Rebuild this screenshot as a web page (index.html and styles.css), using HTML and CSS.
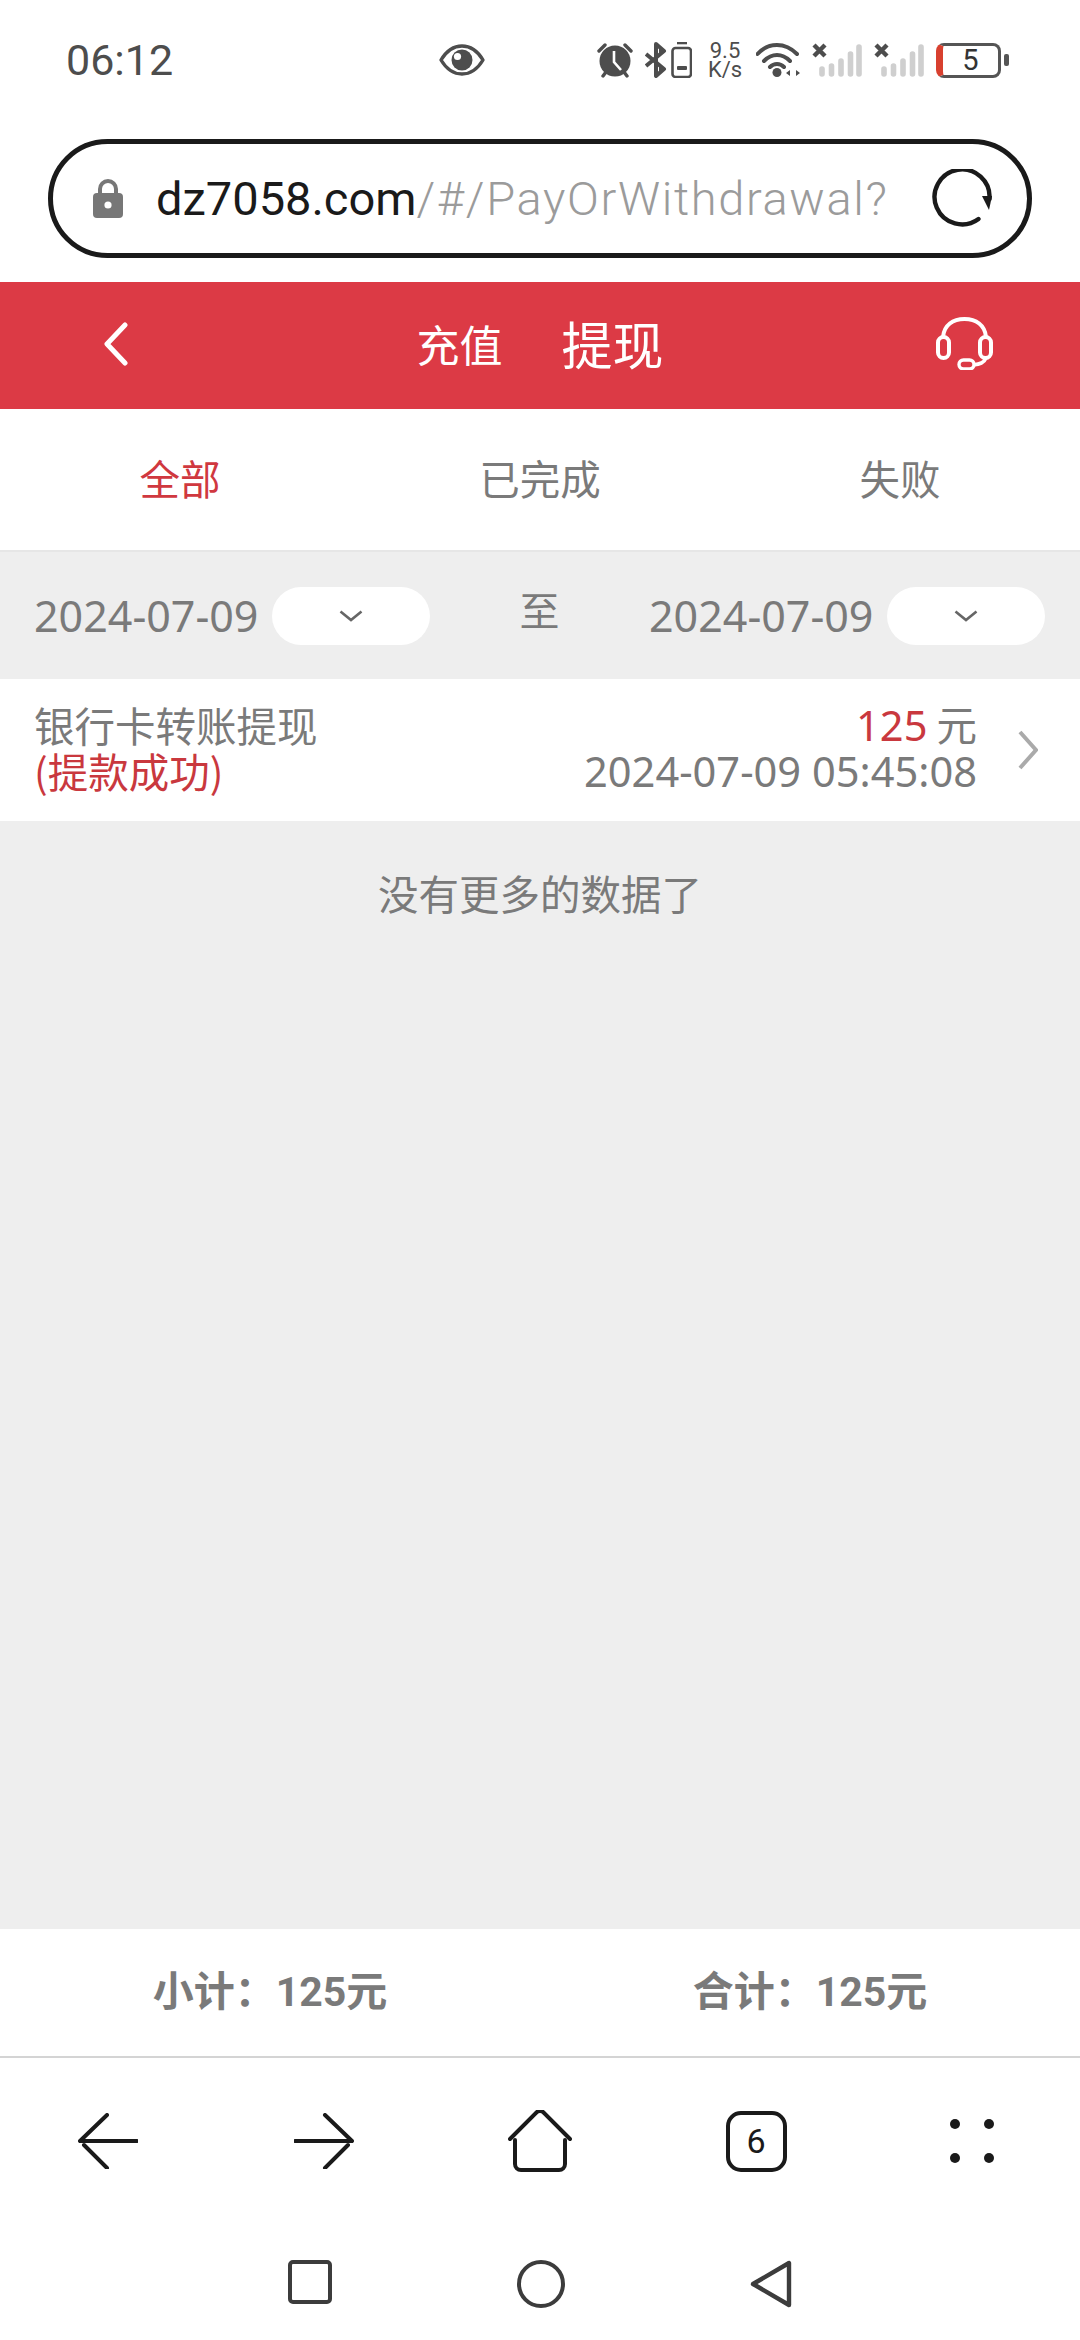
FILE: index.html
```html
<!DOCTYPE html>
<html lang="zh-CN">
<head>
<meta charset="utf-8">
<title>提现</title>
<link rel="stylesheet" href="styles.css">
</head>
<body>
<div class="page">
  <div class="status">
    <span class="clock">06:12</span>
    <svg class="ico" width="46" height="32" viewBox="0 0 46 32"><path d="M2 16C8 6 15 2 23 2s15 4 21 14c-6 10-13 14-21 14S8 26 2 16Z" fill="none" stroke="#4d4d4d" stroke-width="3.4" stroke-linejoin="round"/><circle cx="23" cy="16" r="10.5" fill="#4d4d4d"/><circle cx="18.5" cy="12.5" r="3.6" fill="#fff"/></svg>
    <div class="sys-icons">
      <svg class="ico" width="36" height="35" viewBox="0 0 36 35"><path d="M2 8 8 2M34 8l-6-6M6 33l3-4M30 33l-3-4" stroke="#4d4d4d" stroke-width="3.4" stroke-linecap="round"/><circle cx="18" cy="18" r="15.5" fill="#4d4d4d"/><path d="M17 8v11l7 8" fill="none" stroke="#fff" stroke-width="2.6"/></svg>
      <svg class="ico" width="47" height="36" viewBox="0 0 47 36"><path d="M1 12 19 27l-8 7V2l8 7L1 24" fill="none" stroke="#4d4d4d" stroke-width="4" stroke-linejoin="round"/><path d="M14 6h3l3 3-6 5ZM14 22l6 5-6 6Z" fill="#4d4d4d"/><rect x="27.5" y="6" width="18.5" height="29" rx="3" fill="none" stroke="#4d4d4d" stroke-width="2.6"/><path d="M32 1h10" stroke="#4d4d4d" stroke-width="2.6"/><rect x="32" y="24" width="10" height="4" rx="1" fill="#4d4d4d"/></svg>
      <div class="speed"><span>9.5</span><span>K/s</span></div>
      <svg class="ico" width="44" height="34" viewBox="0 0 44 34"><path d="M1.5 11C7 5 14 2 21 2s14 3 20 9M8 18c4-4 8-6 13-6s9 2 13 6M14 24c2-2 4-3 7-3s5 1 7 3" fill="none" stroke="#4d4d4d" stroke-width="4" stroke-linecap="round"/><circle cx="21" cy="29.500" r="4.500" fill="#4d4d4d"/><path d="M30 30l4-3v6ZM44 30l-4-3v6Z" fill="#4d4d4d"/></svg>
      <svg class="ico" width="50" height="34" viewBox="0 0 50 34"><path d="M2 2l11 11M13 2 2 13" stroke="#4d4d4d" stroke-width="4.400"/><g stroke="#cfcfcf" stroke-width="5.600" stroke-linecap="round"><path d="M10 26v5M19.500 23v8M29 18v13M38.500 11v20M47 4v27"/></g></svg>
      <svg class="ico" width="50" height="34" viewBox="0 0 50 34"><path d="M2 2l11 11M13 2 2 13" stroke="#4d4d4d" stroke-width="4.400"/><g stroke="#cfcfcf" stroke-width="5.600" stroke-linecap="round"><path d="M10 26v5M19.500 23v8M29 18v13M38.500 11v20M47 4v27"/></g></svg>
      <div class="battery">
        <div class="battery-body"><span>5</span></div>
        <i class="battery-nub"></i>
      </div>
    </div>
  </div>

  <div class="url-bar">
    <svg class="ico" width="30" height="39" viewBox="0 0 30 39"><path d="M7 17V10a8 8 0 0 1 16 0v7" fill="none" stroke="#777" stroke-width="4"/><rect y="14" width="30" height="25" rx="4" fill="#777"/><circle cx="15" cy="26" r="3.6" fill="#fff"/></svg>
    <div class="url"><b>dz7058.com</b><span class="url-path">/#/PayOrWithdrawal?</span></div>
    <svg class="ico" width="60" height="60" viewBox="0 0 60 60"><path d="M46.5 50A27.5 27.5 0 1 1 57.5 30" fill="none" stroke="#1a1a1a" stroke-width="4.4" stroke-linecap="round"/><path d="M50 27h10l-3 14Z" fill="#1a1a1a"/></svg>
  </div>

  <header class="topbar">
    <svg class="back ico" width="24" height="44" viewBox="0 0 24 44"><path d="M21 3 3 22l18 19" fill="none" stroke="#fff" stroke-width="5" stroke-linecap="round" stroke-linejoin="round"/></svg>
    <div class="title"><span class="title-small">充值</span><span class="title-big">提现</span></div>
    <svg class="headset ico" width="57" height="53" viewBox="0 0 57 53"><path d="M7 20C8 8 17 2 28.500 2S49 8 50 20" fill="none" stroke="#fff" stroke-width="4"/><rect x="2" y="20" width="11" height="21" rx="5.500" fill="none" stroke="#fff" stroke-width="4"/><rect x="44" y="20" width="11" height="21" rx="5.500" fill="none" stroke="#fff" stroke-width="4"/><path d="M50 41c-2 5-6 6-13 7" fill="none" stroke="#fff" stroke-width="3.600"/><rect x="23" y="43" width="15" height="9" rx="4.500" fill="none" stroke="#fff" stroke-width="3.400"/></svg>
  </header>

  <nav class="tabs">
    <a class="tab active">全部</a>
    <a class="tab">已完成</a>
    <a class="tab">失败</a>
  </nav>

  <div class="filter">
    <div class="date-group">
      <span class="date">2024-07-09</span>
      <div class="pill"><svg width="24" height="12" viewBox="0 0 24 12"><path d="M1.500 1.500 12 10 22.500 1.500" fill="none" stroke="#666" stroke-width="2.600"/></svg></div>
    </div>
    <span class="to">至</span>
    <div class="date-group">
      <span class="date">2024-07-09</span>
      <div class="pill"><svg width="24" height="12" viewBox="0 0 24 12"><path d="M1.500 1.500 12 10 22.500 1.500" fill="none" stroke="#666" stroke-width="2.600"/></svg></div>
    </div>
  </div>

  <div class="record">
    <div class="record-left">
      <span>银行卡转账提现</span>
      <span class="red">(提款成功)</span>
    </div>
    <div class="record-right">
      <span><span class="red num">125</span> 元</span>
      <span class="num">2024-07-09 05:45:08</span>
    </div>
    <svg class="ico" width="20" height="40" viewBox="0 0 20 40"><path d="M2 2 18 20 2 38" fill="none" stroke="#aaa" stroke-width="4"/></svg>
  </div>

  <main class="empty">没有更多的数据了</main>

  <div class="totals">
    <span>小计：125元</span>
    <span>合计：125元</span>
  </div>

  <div class="browser-nav">
    <svg class="ico" width="60" height="56" viewBox="0 0 60 56"><path d="M2 28h57M2 28 29 2M6 32l23 23" fill="none" stroke="#1a1a1a" stroke-width="4" stroke-linecap="round"/></svg>
    <svg class="ico" width="60" height="56" viewBox="0 0 60 56"><path d="M1 28h57M58 28 31 2M54 32 31 55" fill="none" stroke="#1a1a1a" stroke-width="4" stroke-linecap="round"/></svg>
    <svg class="ico" width="64" height="62" viewBox="0 0 64 62"><path d="M2 29 28 3a5 5 0 0 1 8 0l26 26" fill="none" stroke="#1a1a1a" stroke-width="4" stroke-linecap="round"/><path d="M7 30v24a6 6 0 0 0 6 6h38a6 6 0 0 0 6-6V30" fill="none" stroke="#1a1a1a" stroke-width="4" stroke-linecap="round"/></svg>
    <div class="tabs-count">6</div>
    <svg class="ico" width="44" height="44" viewBox="0 0 44 44"><g fill="#1a1a1a"><circle cx="5" cy="5" r="5"/><circle cx="39" cy="5" r="5"/><circle cx="5" cy="39" r="5"/><circle cx="39" cy="39" r="5"/></g></svg>
  </div>

  <div class="system-nav">
    <svg class="ico" width="44" height="44" viewBox="0 0 44 44"><rect x="2" y="2" width="40" height="40" rx="3" fill="none" stroke="#3c3c3c" stroke-width="4"/></svg>
    <svg class="ico" width="48" height="48" viewBox="0 0 48 48"><circle cx="24" cy="24" r="22" fill="none" stroke="#3c3c3c" stroke-width="4"/></svg>
    <svg class="ico" width="42" height="48" viewBox="0 0 42 48"><path d="M39 3v42L3 24Z" fill="none" stroke="#3c3c3c" stroke-width="4.400" stroke-linejoin="round"/></svg>
  </div>
</div>
</body>
</html>
```

FILE: styles.css
```css
* { box-sizing: border-box; }
html, body { margin: 0; padding: 0; }
body {
  background: #fff;
  font-family: "Noto Sans", "Noto Sans CJK SC", sans-serif;
  color: #7a7a7a;
}
.page {
  width: 1080px;
  height: 2340px;
  display: flex;
  flex-direction: column;
  overflow: hidden;
}
.ico { display: block; flex: none; }

.status {
  height: 120px;
  padding: 0 71px 0 66px;
  display: flex;
  align-items: center;
  flex: none;
}
.clock {
  width: 373px;
  font: 400 43px/1 Roboto, sans-serif;
  color: #4d4d4d;
}
.sys-icons {
  margin-left: auto;
  display: flex;
  align-items: center;
  gap: 12px;
}
.speed {
  width: 34px;
  margin: 0 2px 0 4px;
  display: flex;
  flex-direction: column;
  align-items: center;
  font: 400 22px/19px Roboto, sans-serif;
  color: #4d4d4d;
}
.battery { display: flex; align-items: center; gap: 3px; }
.battery-body {
  width: 65px;
  height: 35px;
  border: 3px solid #555;
  border-left: 7px solid #d8402f;
  border-radius: 8px;
  display: flex;
  align-items: center;
  justify-content: center;
  font: 400 29px/1 Roboto, sans-serif;
  color: #333;
}
.battery-nub { width: 5px; height: 12px; border-radius: 2px; background: #555; }

.url-bar {
  margin: 19px 48px 24px;
  height: 119px;
  flex: none;
  border: 5px solid #1a1a1a;
  border-radius: 60px;
  padding: 0 35px 0 40px;
  display: flex;
  align-items: center;
}
.url {
  margin-left: 33px;
  flex: 1;
  font: 300 47px/1 Roboto, sans-serif;
  color: #9b9b9b;
  white-space: nowrap;
}
.url b { font-weight: 400; color: #1a1a1a; }
.url-path { letter-spacing: 1.65px; }

.topbar {
  height: 127px;
  flex: none;
  background: #dc3a45;
  display: grid;
  grid-template-columns: 1fr auto 1fr;
  align-items: center;
  padding: 0 87px;
  color: #fff;
}
.back { margin: 0 0 4px 17px; }
.title {
  display: flex;
  align-items: center;
  gap: 59px;
  margin-bottom: 5px;
  font-family: "Noto Sans CJK SC", sans-serif;
}
.title-small { font-size: 43px; }
.title-big { font-size: 51px; }
.headset { justify-self: end; margin-bottom: 4px; }

.tabs {
  height: 143px;
  flex: none;
  display: grid;
  grid-template-columns: repeat(3, 1fr);
  align-items: center;
  text-align: center;
  padding-bottom: 3px;
  border-bottom: 2px solid #e6e6e6;
  font: 400 40.5px/1 "Noto Sans CJK SC", sans-serif;
}
.tab.active { color: #d0383f; }
.red { color: #c9383e; }

.filter {
  height: 127px;
  flex: none;
  background: #eee;
  padding: 0 35px 0 34px;
  display: flex;
  align-items: center;
  justify-content: space-between;
}
.date-group { display: flex; align-items: center; gap: 15px; }
.date { font: 400 43px/1 "Noto Sans", sans-serif; width: 223px; white-space: nowrap; }
.pill {
  width: 158px;
  height: 58px;
  border-radius: 29px;
  background: #fff;
  display: flex;
  align-items: center;
  justify-content: center;
}
.to { font: 400 40px/1 "Noto Sans CJK SC", sans-serif; margin-bottom: 14px; }

.record {
  height: 142px;
  flex: none;
  background: #fff;
  padding: 0 42px 5px 34px;
  display: flex;
  align-items: center;
  font: 400 40.5px/46px "Noto Sans CJK SC", sans-serif;
}
.record .ico { margin-top: 5px; }
.record-left { display: flex; flex-direction: column; flex: 1; }
.record-right { display: flex; flex-direction: column; align-items: flex-end; margin-right: 41px; }
.num { font-family: "Noto Sans", sans-serif; font-size: 41.6px; }

.empty {
  flex: 1;
  background: #eee;
  text-align: center;
  padding-top: 49px;
  font: 400 40.5px/46px "Noto Sans CJK SC", sans-serif;
}

.totals {
  height: 129px;
  flex: none;
  border-bottom: 2px solid #d4d4d4;
  display: grid;
  grid-template-columns: 1fr 1fr;
  align-items: center;
  text-align: center;
  font: 700 41px/1 Roboto, "Noto Sans CJK SC", sans-serif;
  color: #7a7a7a;
}

.browser-nav {
  height: 166px;
  flex: none;
  display: grid;
  grid-template-columns: repeat(5, 1fr);
  align-items: center;
  justify-items: center;
}
.tabs-count {
  width: 61px;
  height: 61px;
  border: 4px solid #1a1a1a;
  border-radius: 15px;
  display: flex;
  align-items: center;
  justify-content: center;
  font: 400 34px/1 Roboto, sans-serif;
  color: #1a1a1a;
}

.system-nav {
  height: 116px;
  flex: none;
  display: flex;
  justify-content: center;
  align-items: flex-start;
  gap: 185px;
  padding-top: 36px;
}
```
